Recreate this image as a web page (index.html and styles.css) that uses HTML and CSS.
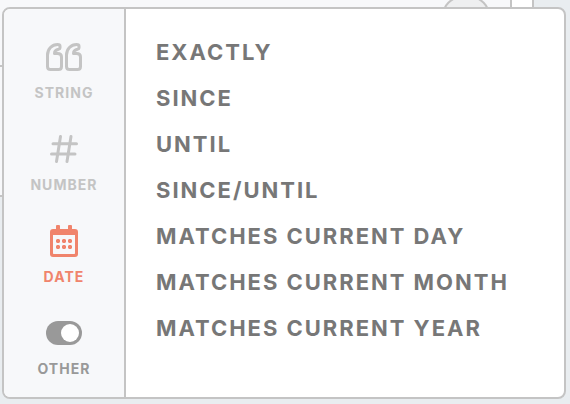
FILE: index.html
```html
<!DOCTYPE html>
<html lang="en">
<head>
<meta charset="utf-8">
<title>Filter type</title>
<link rel="stylesheet" href="styles.css">
</head>
<body>
<div class="backdrop">
  <div class="backdrop-card"></div>
  <div class="backdrop-pill"></div>
</div>
<div class="popover">
  <nav class="types">
    <div class="type">
      <svg class="icon" width="36" height="32" viewBox="0 0 36 32" fill="none" stroke="currentColor" stroke-width="3" stroke-linejoin="round">
        <path id="quote" d="M11.500 3.500Q14 3.500 14 5V7Q14 8 12.500 8.300Q8.500 9 8.500 12.500H11.500Q15.500 12.500 15.500 16V25.500Q15.500 28.500 12.500 28.500H4.500Q1.500 28.500 1.500 25.500V14C1.500 8 6 3.500 11.500 3.500Z"/>
        <use href="#quote" x="19"/>
      </svg>
      <span class="label">STRING</span>
    </div>
    <div class="type">
      <svg class="icon" width="28" height="32" viewBox="0 0 28 32" fill="none" stroke="currentColor" stroke-width="3" stroke-linecap="round">
        <path d="M10.500 3.500 6.500 28.500M21 3.500 17 28.500M3 10.800H26.500M1.500 21H25"/>
      </svg>
      <span class="label">NUMBER</span>
    </div>
    <div class="type date">
      <svg class="icon" width="28" height="32" viewBox="0 0 28 32" fill="currentColor">
        <path fill-rule="evenodd" d="M7 0H9Q10 0 10 1V4H18V1Q18 0 19 0H21Q22 0 22 1V4H25Q28 4 28 7V29Q28 32 25 32H3Q0 32 0 29V7Q0 4 3 4H6V1Q6 0 7 0ZM3 10V28.300Q3 29 3.700 29H24.300Q25 29 25 28.300V10Z"/>
        <path d="M7 14h2l1 1v2l-1 1H7l-1-1v-2zM13 14h2l1 1v2l-1 1h-2l-1-1v-2zM19 14h2l1 1v2l-1 1h-2l-1-1v-2zM7 20h2l1 1v2l-1 1H7l-1-1v-2zM13 20h2l1 1v2l-1 1h-2l-1-1v-2zM19 20h2l1 1v2l-1 1h-2l-1-1v-2z"/>
      </svg>
      <span class="label">DATE</span>
    </div>
    <div class="type other">
      <svg class="icon" width="36" height="32" viewBox="0 0 36 32">
        <rect y="4" width="36" height="24" rx="12" fill="currentColor"/>
        <circle cx="24" cy="16" r="9" fill="#fff"/>
      </svg>
      <span class="label">OTHER</span>
    </div>
  </nav>
  <ul class="options">
    <li>EXACTLY</li>
    <li>SINCE</li>
    <li>UNTIL</li>
    <li>SINCE/UNTIL</li>
    <li>MATCHES CURRENT DAY</li>
    <li>MATCHES CURRENT MONTH</li>
    <li>MATCHES CURRENT YEAR</li>
  </ul>
</div>
</body>
</html>
```
FILE: styles.css
```css
* { box-sizing: border-box; }

body {
  margin: 0;
  height: 404px;
  padding: 7px 4px 5px 2px;
  overflow: hidden;
  background: #e9edf0;
  font-family: Inter, "Liberation Sans", sans-serif;
  font-weight: 700;
}

.backdrop {
  position: absolute;
  inset: 0;
  overflow: hidden;
}

.backdrop-card {
  width: 534px;
  height: 197px;
  border-right: 2px solid #c4c4c4;
  border-bottom: 2px solid #c4c4c4;
  background:
    linear-gradient(#c4c4c4, #c4c4c4) 0 65px / 10px 2px no-repeat,
    linear-gradient(90deg, #f7f8fa 510px, #c4c4c4 510px 512px, #fff 512px);
}

.backdrop-pill {
  position: absolute;
  left: 442px;
  top: -4px;
  width: 48px;
  height: 48px;
  border: 2px solid #c4c4c4;
  border-radius: 20px;
  background: #eeeff0;
}

.popover {
  position: relative;
  display: flex;
  width: 564px;
  height: 392px;
  border: 2px solid #c4c4c4;
  border-radius: 8px;
  overflow: hidden;
  background: #fff;
}

.types {
  width: 122px;
  padding-top: 16px;
  border-right: 2px solid #c4c4c4;
  background: #f7f8fa;
}

.type {
  display: flex;
  flex-direction: column;
  align-items: center;
  height: 92px;
  padding-top: 16px;
  color: #c4c4c4;
}

.type.date { color: #f0846c; }
.type.other { color: #999; }

.icon { display: block; }

.label {
  margin-top: 10px;
  font-size: 14px;
  line-height: 20px;
  letter-spacing: 1.05px;
}

.options {
  margin: 0;
  padding: 20px 0 0 30px;
  list-style: none;
  color: #777;
  font-size: 22px;
  line-height: 46px;
  letter-spacing: 1.98px;
  white-space: nowrap;
}
```
